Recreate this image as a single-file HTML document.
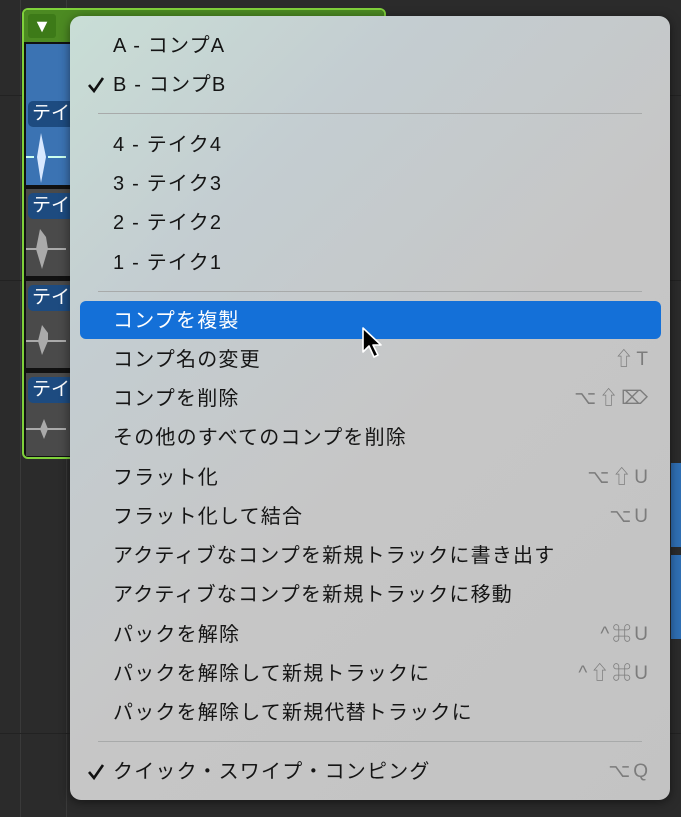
<!DOCTYPE html>
<html><head><meta charset="utf-8"><style>
*{margin:0;padding:0;box-sizing:border-box}
body{width:681px;height:817px;background:#2b2b2b;position:relative;overflow:hidden;font-family:"Liberation Sans","Noto Sans CJK JP",sans-serif}
.vl{position:absolute;top:0;bottom:0;width:1px;background:#3a3a3a}
.hl{position:absolute;left:0;right:0;height:1px;background:#222}
.green{position:absolute;left:22px;top:8px;width:364px;height:451px;border:2px solid #7fd13b;border-radius:6px;background:#111}
.lane{position:absolute;left:26px;width:60px}
.tk{position:absolute;left:2px;top:4px;width:60px;height:26px;background:#1d4b80;border-radius:5px;color:#fff;font-size:19px;padding-left:4px;line-height:26px}
.menu{position:absolute;left:70px;top:16px;width:600px;height:784px;border-radius:11px;background:linear-gradient(135deg,#c9ded6 0%,#c4cdd1 25%,#c6c6c6 55%,#c3c3c3 100%);box-shadow:0 2px 10px rgba(0,0,0,.5)}
.it{position:absolute;left:43px;font-size:20px;letter-spacing:1.2px;color:#151515;line-height:22px;white-space:nowrap}
.ck{position:absolute;left:17px;top:0}
.sc{position:absolute;right:19px;font-size:19px;color:#7c7c7c;letter-spacing:3px;line-height:22px}
.sep{position:absolute;left:28px;right:28px;height:1px;background:#a8aaaa}
.hi{position:absolute;left:10px;width:581px;top:285px;height:38px;border-radius:6px;background:#1470d8}
</style></head><body>
<div class="vl" style="left:20px"></div><div class="vl" style="left:66px"></div>
<div class="hl" style="top:95px"></div><div class="hl" style="top:280px"></div><div class="hl" style="top:733px"></div>
<div class="green">
<div style="position:absolute;left:0;top:0;width:360px;height:32px;background:#4c8a22;border-radius:4px 4px 0 0"></div>
<div style="position:absolute;left:4px;top:4px;width:28px;height:24px;background:#3d7a18;color:#fff;font-size:18px;text-align:center;line-height:24px;border-radius:3px">▼</div>
<div style="position:absolute;left:2px;top:34px;width:60px;height:54px;background:#3b73b3"></div>
</div>
<div class="lane" style="top:97px;height:88px;background:#3b73b3"><div class="tk">テイ</div>
<svg width="60" height="60" style="position:absolute;top:30px;left:0"><path d="M0 30H8 M22 30H40" stroke="#cfe" stroke-width="2"/><path d="M11 30L15 6 20 30 15 56Z" fill="#d8e8ff"/></svg></div>
<div class="lane" style="top:189px;height:87px;background:#4a4a4a"><div class="tk">テイ</div>
<svg width="60" height="60" style="position:absolute;top:28px;left:0"><path d="M0 32H40" stroke="#aaa" stroke-width="2"/><path d="M10 32L14 12 20 20 22 32 16 52Z" fill="#aaa"/></svg></div>
<div class="lane" style="top:281px;height:87px;background:#4a4a4a"><div class="tk">テイ</div>
<svg width="60" height="60" style="position:absolute;top:28px;left:0"><path d="M0 32H40" stroke="#aaa" stroke-width="2"/><path d="M12 32L16 16 22 24 22 32 16 46Z" fill="#aaa"/></svg></div>
<div class="lane" style="top:373px;height:83px;background:#4a4a4a"><div class="tk">テイ</div>
<svg width="60" height="60" style="position:absolute;top:26px;left:0"><path d="M0 30H40" stroke="#aaa" stroke-width="2"/><path d="M14 30L18 20 22 30 18 40Z" fill="#aaa"/></svg></div>
<div style="position:absolute;left:671px;top:463px;width:10px;height:84px;background:#2f6fb4"></div>
<div style="position:absolute;left:671px;top:555px;width:10px;height:84px;background:#2f6fb4"></div>
<div class="menu">
<div class="it" style="top:19px">A - コンプA</div>
<svg class="ck" style="top:60px" width="18" height="18"><path d="M2 9L7 15 16 2" stroke="#111" stroke-width="2.6" fill="none"/></svg><div class="it" style="top:58px">B - コンプB</div>
<div class="sep" style="top:97px"></div>
<div class="it" style="top:118px">4 - テイク4</div>
<div class="it" style="top:157px">3 - テイク3</div>
<div class="it" style="top:196px">2 - テイク2</div>
<div class="it" style="top:236px">1 - テイク1</div>
<div class="sep" style="top:275px"></div>
<div class="hi"></div>
<div class="it" style="top:294px;color:#fff">コンプを複製</div>
<div class="it" style="top:333px">コンプ名の変更</div><div class="sc" style="top:333px">⇧T</div>
<div class="it" style="top:372px">コンプを削除</div><div class="sc" style="top:372px">⌥⇧⌦</div>
<div class="it" style="top:411px">その他のすべてのコンプを削除</div>
<div class="it" style="top:451px">フラット化</div><div class="sc" style="top:451px">⌥⇧U</div>
<div class="it" style="top:490px">フラット化して結合</div><div class="sc" style="top:490px">⌥U</div>
<div class="it" style="top:529px">アクティブなコンプを新規トラックに書き出す</div>
<div class="it" style="top:568px">アクティブなコンプを新規トラックに移動</div>
<div class="it" style="top:608px">パックを解除</div><div class="sc" style="top:608px">^⌘U</div>
<div class="it" style="top:647px">パックを解除して新規トラックに</div><div class="sc" style="top:647px">^⇧⌘U</div>
<div class="it" style="top:686px">パックを解除して新規代替トラックに</div>
<div class="sep" style="top:725px"></div>
<svg class="ck" style="top:747px" width="18" height="18"><path d="M2 9L7 15 16 2" stroke="#111" stroke-width="2.6" fill="none"/></svg><div class="it" style="top:745px">クイック・スワイプ・コンピング</div><div class="sc" style="top:745px">⌥Q</div>
</div>
<svg width="30" height="36" style="position:absolute;left:360px;top:326px"><path d="M3 2L3 26 9 20 14 31 18 29 13 19 21 19Z" fill="#000" stroke="#fff" stroke-width="1.6" stroke-linejoin="round"/></svg>
</body></html>
